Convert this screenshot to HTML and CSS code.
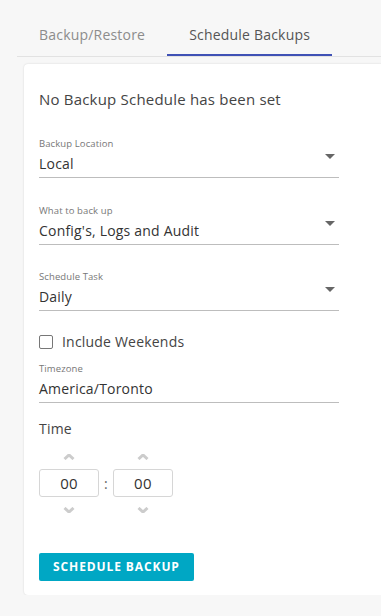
FILE: index.html
```html
<!DOCTYPE html>
<html lang="en">
<head>
  <meta charset="UTF-8">
  <title>Schedule Backups</title>
  <link rel="stylesheet" href="styles.css">
</head>
<body>
  <div class="tabs">
    <div class="tab">Backup/Restore</div>
    <div class="tab active">Schedule Backups</div>
  </div>
  <div class="card">
    <h2 class="status">No Backup Schedule has been set</h2>

    <div class="field select">
      <label>Backup Location</label>
      <div class="value">Local</div>
      <span class="caret"></span>
    </div>

    <div class="field select">
      <label>What to back up</label>
      <div class="value">Config's, Logs and Audit</div>
      <span class="caret"></span>
    </div>

    <div class="field select">
      <label>Schedule Task</label>
      <div class="value">Daily</div>
      <span class="caret"></span>
    </div>

    <div class="checkbox-row">
      <span class="checkbox"></span>
      <span>Include Weekends</span>
    </div>

    <div class="field last">
      <label>Timezone</label>
      <div class="value">America/Toronto</div>
    </div>

    <div class="time-title">Time</div>
    <div class="time-picker">
      <div class="spinner">
        <svg class="chev up" viewBox="0 0 12 6" width="12" height="6"><path d="M1.5 5 L6 1 L10.5 5" /></svg>
        <div class="time-box">00</div>
        <svg class="chev down" viewBox="0 0 12 6" width="12" height="6"><path d="M1.5 1 L6 5 L10.5 1" /></svg>
      </div>
      <span class="colon">:</span>
      <div class="spinner">
        <svg class="chev up" viewBox="0 0 12 6" width="12" height="6"><path d="M1.5 5 L6 1 L10.5 5" /></svg>
        <div class="time-box">00</div>
        <svg class="chev down" viewBox="0 0 12 6" width="12" height="6"><path d="M1.5 1 L6 5 L10.5 1" /></svg>
      </div>
    </div>

    <button class="btn">SCHEDULE BACKUP</button>
  </div>
</body>
</html>
```
FILE: styles.css
```css
body {
  margin: 0;
  background: #f7f7f7;
  font-family: "Open Sans", "Liberation Sans", sans-serif;
  letter-spacing: 0.2px;
  color: #444;
  overflow: hidden;
}

.tabs {
  display: flex;
  margin: 14px 0 0 17px;
  border-bottom: 1px solid #e2e2e2;
}

.tab {
  padding: 0 22px;
  height: 42px;
  line-height: 42px;
  font-size: 14px;
  color: #8c8c8c;
  box-sizing: border-box;
}

.tab.active {
  color: #555;
  border-bottom: 2px solid #3f51b5;
}

.card {
  margin: 7px 0 0 24px;
  width: 360px;
  height: 531px;
  box-sizing: border-box;
  padding: 24px 15px 0;
  background: #fff;
  border-radius: 4px;
  box-shadow: 0 0 2px rgba(0, 0, 0, 0.15);
}

.status {
  margin: 0 0 28px;
  font-size: 15px;
  font-weight: normal;
  color: #444;
  line-height: 22px;
}

.field {
  position: relative;
  width: 300px;
  border-bottom: 1px solid #bdbdbd;
  margin-bottom: 26.5px;
}

.field.last {
  margin-bottom: 16px;
}

.field label {
  display: block;
  font-size: 9.5px;
  letter-spacing: 0.1px;
  color: #777;
  line-height: 12px;
  margin-bottom: 2px;
}

.field .value {
  font-size: 14px;
  color: #333;
  line-height: 23px;
  padding-bottom: 2px;
}

.caret {
  position: absolute;
  right: 4px;
  top: 16px;
  border-left: 5px solid transparent;
  border-right: 5px solid transparent;
  border-top: 5px solid #666;
}

.checkbox-row {
  display: flex;
  align-items: center;
  gap: 9px;
  height: 20px;
  font-size: 14px;
  color: #444;
  margin: -6px 0 11px;
}

.checkbox {
  width: 12px;
  height: 12px;
  border: 1px solid #777;
  border-radius: 2px;
}

.time-title {
  font-size: 14px;
  color: #444;
  line-height: 20px;
}

.time-picker {
  display: flex;
  align-items: center;
  gap: 5px;
  margin-top: 15px;
}

.spinner {
  display: flex;
  flex-direction: column;
  align-items: center;
}

.chev {
  fill: none;
  stroke: #cccccc;
  stroke-width: 3;
}

.chev.up {
  margin-bottom: 9px;
}

.chev.down {
  margin-top: 10px;
}

.time-box {
  width: 60px;
  height: 28px;
  box-sizing: border-box;
  border: 1px solid #d6d6d6;
  border-radius: 3px;
  text-align: center;
  line-height: 26px;
  font-size: 15px;
  color: #333;
}

.colon {
  font-size: 14px;
  color: #666;
}

.btn {
  display: block;
  margin-top: 40px;
  height: 28px;
  padding: 0 14px;
  border: none;
  border-radius: 2px;
  background: #00a7c4;
  color: #fff;
  font-family: inherit;
  font-size: 12px;
  font-weight: bold;
  letter-spacing: 0.9px;
}
```
